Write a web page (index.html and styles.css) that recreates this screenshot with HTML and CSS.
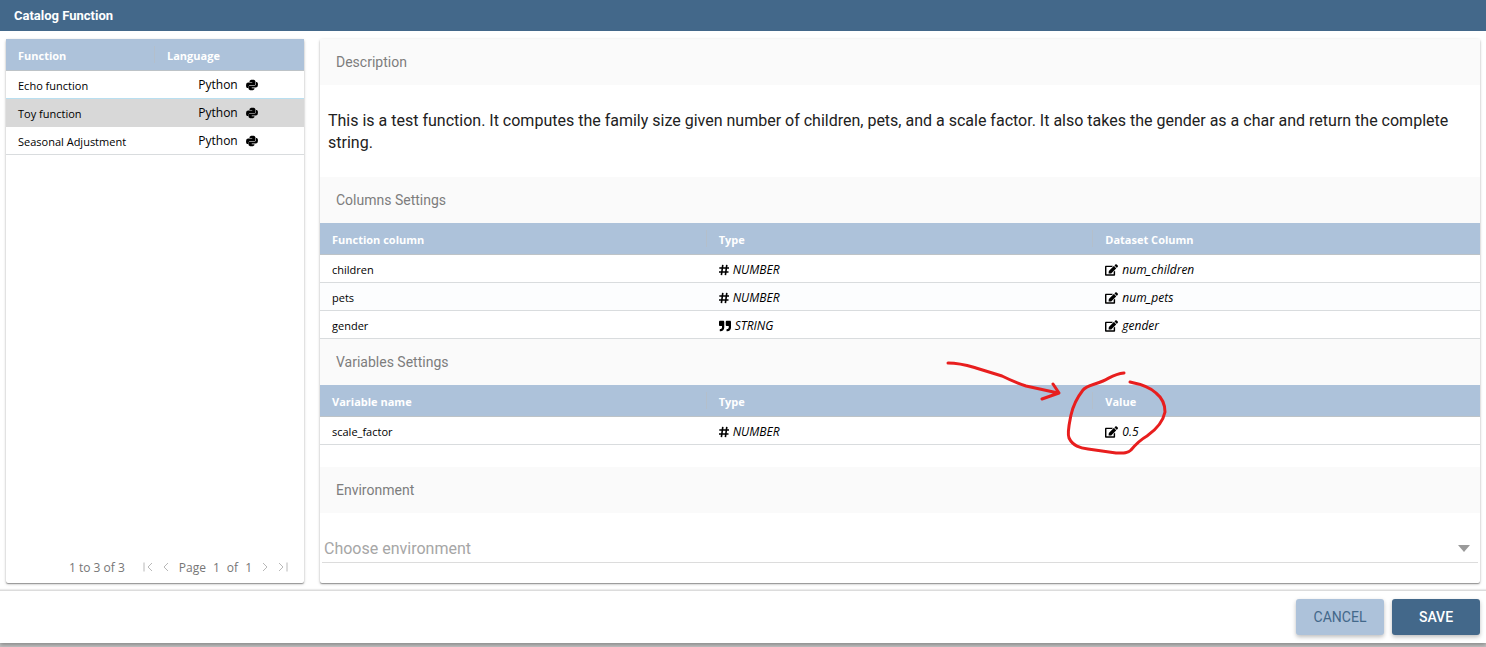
FILE: index.html
```html
<!DOCTYPE html>
<html lang="en">
<head>
<meta charset="utf-8">
<title>Catalog Function</title>
<link rel="stylesheet" href="styles.css">
</head>
<body>
<svg class="sprite" aria-hidden="true">
  <symbol id="python" viewBox="0 0 24 24"><path d="M7 5.500C7 2.500 9 1.500 13 1.500s6 1.200 6 4V10c0 1.600-1 2.500-3 2.500H9c-2.600 0-4 1.300-4 3.500v2H3.500C1 18-.2 15.500.200 12S2 7 4.500 7H12.500V6H7z"/><path d="M17 18.500c0 3-2 4-6 4s-6-1.200-6-4V15.500C5 14 6.500 13.500 8 13.500h7c3 0 5-1.300 5-3.500V6h1c2.200 0 3.200 2.500 2.800 6S22 17 19.500 17H11.500v1.500z"/></symbol>
  <symbol id="edit" viewBox="0 0 576 512"><path d="M402.6 83.2l90.2 90.2c3.8 3.8 3.8 10 0 13.8L274.4 405.6l-92.8 10.3c-12.4 1.4-22.9-9.1-21.5-21.5l10.3-92.8L388.8 83.2c3.8-3.8 10-3.8 13.8 0zm162-22.9l-48.8-48.8c-15.2-15.2-39.9-15.2-55.2 0l-35.4 35.4c-3.8 3.8-3.8 10 0 13.8l90.2 90.2c3.8 3.8 10 3.8 13.8 0l35.4-35.4c15.2-15.3 15.2-40 0-55.2zM384 346.2V448H64V128h229.8c3.2 0 6.2-1.3 8.5-3.5l40-40c7.6-7.6 2.2-20.5-8.5-20.5H48C21.5 64 0 85.5 0 112v352c0 26.5 21.5 48 48 48h352c26.5 0 48-21.5 48-48V306.2c0-10.7-12.9-16-20.5-8.5l-40 40c-2.2 2.3-3.5 5.3-3.5 8.5z"/></symbol>
  <symbol id="quote" viewBox="0 0 512 512"><path d="M464 32H336c-26.5 0-48 21.5-48 48v128c0 26.5 21.5 48 48 48h80v64c0 35.3-28.7 64-64 64h-8c-13.3 0-24 10.7-24 24v48c0 13.3 10.7 24 24 24h8c88.4 0 160-71.6 160-160V80c0-26.5-21.5-48-48-48zm-288 0H48C21.5 32 0 53.5 0 80v128c0 26.5 21.5 48 48 48h80v64c0 35.3-28.7 64-64 64h-8c-13.3 0-24 10.7-24 24v48c0 13.3 10.7 24 24 24h8c88.4 0 160-71.6 160-160V80c0-26.5-21.5-48-48-48z"/></symbol>
  <symbol id="hash" viewBox="0 0 10 12"><path d="M3.800 .8 2.400 11.200M7.800 .8 6.400 11.200M.3 4h9.700M0 8h9.500" fill="none" stroke="currentColor" stroke-width="1.600"/></symbol>
</svg>

<div class="dialog">
  <header class="toolbar"><h1 class="toolbar-title">Catalog Function</h1></header>

  <main class="content">
    <section class="card list">
      <table class="grid grid-list">
        <thead><tr><th>Function</th><th>Language</th></tr></thead>
        <tbody>
          <tr><td>Echo function</td><td class="language"><span class="cell">Python <svg class="icon-python"><use href="#python"/></svg></span></td></tr>
          <tr class="selected"><td>Toy function</td><td class="language"><span class="cell">Python <svg class="icon-python"><use href="#python"/></svg></span></td></tr>
          <tr><td>Seasonal Adjustment</td><td class="language"><span class="cell">Python <svg class="icon-python"><use href="#python"/></svg></span></td></tr>
        </tbody>
      </table>
      <nav class="pager" aria-label="Pages">
        <span class="pager-summary">1 to 3 of 3</span>
        <button class="pager-button" aria-label="First page" disabled><svg class="icon-page" viewBox="0 0 10 10"><path d="M1 .5v9M9 1 5 5l4 4"/></svg></button>
        <button class="pager-button" aria-label="Previous page" disabled><svg class="icon-page" viewBox="0 0 10 10"><path d="M7 1 3 5l4 4"/></svg></button>
        <span class="pager-pages"><span>Page</span><span>1</span><span>of</span><span>1</span></span>
        <button class="pager-button" aria-label="Next page" disabled><svg class="icon-page" viewBox="0 0 10 10"><path d="m3 1 4 4-4 4"/></svg></button>
        <button class="pager-button" aria-label="Last page" disabled><svg class="icon-page" viewBox="0 0 10 10"><path d="m1 1 4 4-4 4M9 .5v9"/></svg></button>
      </nav>
    </section>

    <div class="card detail">
      <section>
        <h2 class="section-title">Description</h2>
        <p class="description">This is a test function. It computes the family size given number of children, pets, and a scale factor. It also takes the gender as a char and return the complete string.</p>
      </section>

      <section>
        <h2 class="section-title">Columns Settings</h2>
        <table class="grid">
          <thead><tr><th>Function column</th><th>Type</th><th>Dataset Column</th></tr></thead>
          <tbody>
            <tr><td>children</td><td><i class="cell"><svg class="icon-hash"><use href="#hash"/></svg>NUMBER</i></td><td><i class="cell"><svg class="icon-edit"><use href="#edit"/></svg>num_children</i></td></tr>
            <tr class="even"><td>pets</td><td><i class="cell"><svg class="icon-hash"><use href="#hash"/></svg>NUMBER</i></td><td><i class="cell"><svg class="icon-edit"><use href="#edit"/></svg>num_pets</i></td></tr>
            <tr><td>gender</td><td><i class="cell"><svg class="icon-quote"><use href="#quote"/></svg>STRING</i></td><td><i class="cell"><svg class="icon-edit"><use href="#edit"/></svg>gender</i></td></tr>
          </tbody>
        </table>
      </section>

      <section class="variables">
        <h2 class="section-title">Variables Settings</h2>
        <table class="grid">
          <thead><tr><th>Variable name</th><th>Type</th><th>Value</th></tr></thead>
          <tbody>
            <tr><td>scale_factor</td><td><i class="cell"><svg class="icon-hash"><use href="#hash"/></svg>NUMBER</i></td><td><i class="cell"><svg class="icon-edit"><use href="#edit"/></svg>0.5</i></td></tr>
          </tbody>
        </table>
        <svg class="marker" viewBox="940 339 240 120" aria-hidden="true">
          <path d="M948 363C960 363 966 365 976 368L1002 376C1012 381 1017 383 1026 386L1058 393M1053 384 1059 393 1042 399"/>
          <path d="M1124 373C1114 374 1110 378 1103 381C1094 385 1087 385 1083 390C1076 399 1073 406 1071 415C1069 425 1067 433 1069 438C1073 446 1080 448 1088 449L1116 453C1122 453 1127 454 1131 450C1136 444 1140 440 1147 436C1157 429 1163 422 1165 412C1165 404 1161 397 1156 393C1150 387 1140 384 1130 382"/>
        </svg>
      </section>

      <section>
        <h2 class="section-title">Environment</h2>
        <div class="select-field">
          <select class="select" aria-label="Environment"><option>Choose environment</option></select>
        </div>
      </section>
    </div>
  </main>

  <footer class="actions">
    <button class="button button-cancel">CANCEL</button>
    <button class="button button-save">SAVE</button>
  </footer>
</div>
</body>
</html>
```
FILE: styles.css
```css
* { box-sizing: border-box; }

body {
  margin: 0;
  padding-bottom: 4px;
  min-height: 100vh;
  display: flex;
  background: #c4c4c4;
  font-family: Roboto, sans-serif;
  color: #212121;
}

h1, h2, p { margin: 0; }

.sprite { position: absolute; width: 0; height: 0; }

.dialog {
  flex: 1;
  min-width: 0;
  display: flex;
  flex-direction: column;
  background: #fff;
  box-shadow: 0 2px 4px rgba(0, 0, 0, .3);
}

.toolbar {
  height: 31px;
  padding: 0 14px;
  display: flex;
  align-items: center;
  background: #43688a;
  color: #fff;
}

.toolbar-title { font-size: 13px; font-weight: 700; }

.content {
  flex: 1;
  display: grid;
  grid-template-columns: minmax(298px, 20%) minmax(0, 1fr);
  gap: 16px;
  padding: 8px 6px 7px;
}

.card {
  background: #fff;
  border-radius: 2px;
  box-shadow: 0 1px 1px rgba(0, 0, 0, .3), 0 1px 3px rgba(0, 0, 0, .25);
}

.list {
  display: flex;
  flex-direction: column;
  justify-content: space-between;
}

.grid {
  width: 100%;
  table-layout: fixed;
  border-collapse: separate;
  border-spacing: 0;
  font-family: "Open Sans", sans-serif;
  font-size: 11px;
  line-height: 16px;
  color: #000;
}

.grid th {
  height: 32px;
  padding: 3px 12px 0;
  background: #adc2da;
  border-bottom: 1px solid #bdc3c7;
  color: #fff;
  font-weight: 700;
  text-align: left;
}

.grid th:not(:last-child) {
  background: linear-gradient(#b4bfcb, #b4bfcb) right 7px / 1px 17px no-repeat #adc2da;
}

.grid td {
  height: 28px;
  padding: 3px 12px 0;
  border-bottom: 1px solid #d9dcde;
}

.even td { background: #fcfdfe; }

.grid-list td { border-bottom-color: transparent; }
.grid-list tr:first-child td { border-bottom-color: #b9dff0; }
.grid-list tr:last-child td { border-bottom-color: #d9dcde; }
.grid-list .selected td { background: #d8d8d8; }
.grid-list .language { padding: 1px 15px 0 12px; }
.language .cell { justify-content: center; gap: 8px; }

.cell { display: flex; align-items: center; gap: 4px; font-size: 12px; }

.cell svg { fill: #000; flex: none; }
.icon-python { width: 12px; height: 12px; }
.icon-hash { width: 10px; height: 12px; }
.icon-quote { width: 12px; height: 12px; }
.icon-edit { width: 13px; height: 12px; }

.pager {
  height: 32px;
  padding: 0 16px;
  display: flex;
  align-items: center;
  justify-content: flex-end;
  gap: 8px;
  font-family: "Open Sans", sans-serif;
  font-size: 12px;
  color: #767676;
}

.pager-summary { margin-right: 10px; }
.pager-pages { display: flex; gap: 7px; }
.pager-button { padding: 0; border: 0; background: none; display: flex; }

.icon-page { width: 10px; height: 10px; fill: none; stroke: #b8b8b8; stroke-width: 1; }

.section-title {
  padding: 16px;
  background: #fafafa;
  color: #7d7d7d;
  font-size: 14px;
  font-weight: 400;
  line-height: 14px;
}

.description {
  padding: 25px 8px 23px;
  font-size: 16px;
  line-height: 22px;
}

.variables { position: relative; margin-bottom: 22px; }

.marker {
  position: absolute;
  top: 0;
  left: calc(66.666% - 153px);
  width: 240px;
  height: 120px;
  fill: none;
  stroke: #e81e1e;
  stroke-width: 3;
  stroke-linecap: round;
  stroke-linejoin: round;
  pointer-events: none;
}

.select-field {
  margin: 21px 2px 20px;
  display: flex;
  align-items: center;
  border-bottom: 1px solid #dcdcdc;
}

.select-field::after {
  content: "";
  margin-right: 8px;
  border: solid transparent;
  border-width: 7px 6px 0;
  border-top-color: #9a9a9a;
}

.select {
  appearance: none;
  flex: 1;
  min-width: 0;
  height: 28px;
  padding: 0 2px;
  border: 0;
  background: none;
  color: #a6a6a6;
  font-family: inherit;
  font-size: 16px;
}

.actions {
  padding: 8px 6px;
  display: flex;
  justify-content: flex-end;
  gap: 8px;
  border-top: 1px solid #dcdcdc;
  box-shadow: 0 -1px 1px #ececec;
}

.button {
  min-width: 88px;
  height: 36px;
  padding: 0 8px;
  border: 0;
  border-radius: 3px;
  box-shadow: 0 2px 4px rgba(0, 0, 0, .26);
  font-family: inherit;
  font-size: 14px;
}

.button-cancel { background: #adc2da; color: #43688a; font-weight: 400; }
.button-save { background: #43688a; color: #fff; font-weight: 500; }
```
